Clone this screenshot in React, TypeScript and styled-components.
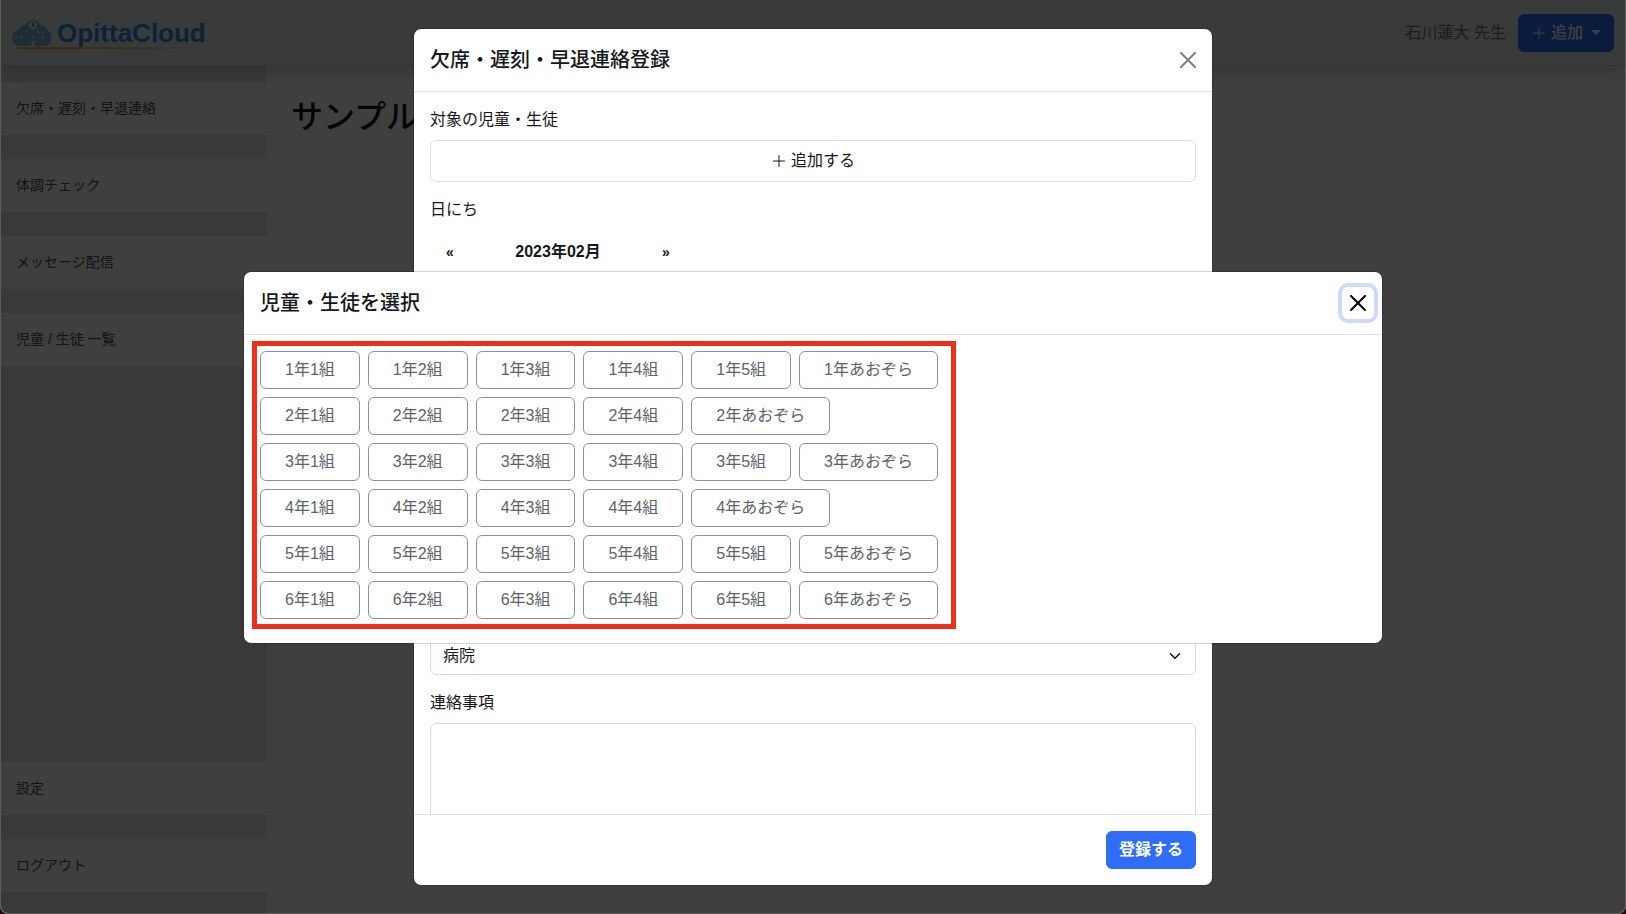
import React from "react";
import styled, { createGlobalStyle } from "styled-components";

const GlobalStyle = createGlobalStyle`
  *, *::before, *::after { box-sizing: border-box; }
  body {
    margin: 0;
    background: #2a060c;
    color: #14171a;
    font: 16px/24px "Liberation Sans", "Noto Sans CJK JP", sans-serif;
  }
  button, select, textarea { font: inherit; color: inherit; margin: 0; }
  h1, h2, p { margin: 0; }
`;

/* ---------- window and page behind the dialogs ---------- */

const Window = styled.div`
  position: relative;
  display: flex;
  flex-direction: column;
  height: 100vh;
  overflow: hidden;
  background: #fff;
  border: 1px solid #5c5c5c;
  border-top: 0;
  border-radius: 0 0 8px 8px;
`;

const Header = styled.header`
  position: relative;
  display: flex;
  align-items: center;
  justify-content: space-between;
  flex: none;
  height: 66px;
  padding: 0 11px;
  background: #e5e8eb;
  border-bottom: 1px solid #d0d3d6;
  box-shadow: 0 8px 16px rgba(0, 0, 0, 0.15);
`;

const Brand = styled.a`
  display: flex;
  align-items: center;
  gap: 5px;
  color: #2f8ddc;
  font-size: 26px;
  font-weight: 700;
  line-height: 32px;
  text-decoration: none;
  background: linear-gradient(90deg, #f5a81c, rgba(245, 168, 28, 0.6) 60%, rgba(245, 168, 28, 0)) 3px 100% / 100% 2px
    no-repeat;
`;

const Account = styled.div`
  display: flex;
  align-items: center;
  gap: 12px;
  color: #6c757d;
`;

const PrimaryButton = styled.button`
  display: inline-flex;
  align-items: center;
  gap: 4px;
  padding: 6px 12px;
  border: 1px solid #2f6df6;
  border-radius: 6px;
  background: #2f6df6;
  color: #fff;
  font-weight: ${(p: { $bold?: boolean }) => (p.$bold ? 700 : 500)};
`;

const Caret = styled.span`
  margin-left: 4px;
  border: 5px solid transparent;
  border-top-color: currentColor;
  border-bottom: 0;
`;

const Columns = styled.div`
  display: flex;
  flex: 1;
  min-height: 0;
`;

const Sidebar = styled.nav`
  display: flex;
  flex-direction: column;
  gap: 24px;
  flex: none;
  width: 266px;
  padding: 16px 0 21px;
  background: #e3e7eb;
`;

const NavGroup = styled.div`
  display: flex;
  flex-direction: column;
  gap: 24px;
  &:last-child { margin-top: auto; }
`;

const NavLink = styled.a`
  padding: 16px 15px;
  background: #fff;
  color: #495057;
  font-size: 14px;
  line-height: 21px;
  text-decoration: none;
`;

const Main = styled.main`
  flex: 1;
  padding: 32px 24px;
`;

const PageTitle = styled.h1`
  font-size: 32px;
  font-weight: 500;
  line-height: 38px;
`;

/* ---------- dialogs ---------- */

const Backdrop = styled.div`
  position: absolute;
  inset: 0;
  background: rgba(0, 0, 0, 0.5);
`;

const ModalLayer = styled.div`
  position: absolute;
  inset: 0;
  display: flex;
  align-items: center;
  justify-content: center;
  padding: 28px 28px 27px;
`;

const Dialog = styled.section<{ $width: number; $tall?: boolean }>`
  display: flex;
  flex-direction: column;
  width: 100%;
  max-width: ${(p) => p.$width}px;
  height: ${(p) => (p.$tall ? "100%" : "auto")};
  overflow: hidden;
  background: #fff;
  background-clip: padding-box;
  border: 1px solid rgba(0, 0, 0, 0.175);
  border-radius: 8px;
`;

const DialogHeader = styled.header`
  display: flex;
  align-items: center;
  justify-content: space-between;
  flex: none;
  padding: 16px;
  border-bottom: 1px solid #dee2e6;
`;

const DialogTitle = styled.h2`
  font-size: 20px;
  font-weight: 500;
  line-height: 30px;
`;

const CloseButton = styled.button<{ $focused?: boolean }>`
  display: grid;
  place-items: center;
  width: 32px;
  height: 32px;
  margin: -8px;
  padding: 0;
  border: 0;
  border-radius: 6px;
  background: none;
  color: ${(p) => (p.$focused ? "#000" : "#7f7f7f")};
  box-shadow: ${(p) => (p.$focused ? "0 0 0 4px #cbdafd" : "none")};
`;

const FormBody = styled.div`
  display: flex;
  flex-direction: column;
  flex: 1;
  gap: 16px;
  min-height: 0;
  overflow: hidden;
  padding: 16px;
`;

const Field = styled.div`
  display: flex;
  flex-direction: column;
  flex: none;
  gap: 8px;
`;

const AddRow = styled.button`
  display: flex;
  align-items: center;
  justify-content: center;
  gap: 4px;
  padding: 8px 16px;
  border: 1px solid #dfdfdf;
  border-radius: 6px;
  background: #fff;
`;

const Calendar = styled.div`
  min-height: 391px;
`;

const CalendarHead = styled.div`
  display: grid;
  grid-template-columns: 36px 180px 36px;
  align-items: center;
  height: 44px;
  padding-left: 2px;
  font-weight: 700;
  text-align: center;
`;

const MonthStep = styled.button`
  padding: 0;
  border: 0;
  background: none;
  font-size: 14px;
`;

const SelectWrap = styled.div`
  position: relative;
  display: flex;
  svg {
    position: absolute;
    right: 13px;
    top: 13px;
    pointer-events: none;
  }
`;

const Select = styled.select`
  flex: 1;
  height: 38px;
  padding: 6px 12px;
  appearance: none;
  border: 1px solid #d5d9e0;
  border-radius: 6px;
  background: #fff;
`;

const TextArea = styled.textarea`
  height: 160px;
  padding: 6px 12px;
  border: 1px solid #d5d9e0;
  border-radius: 6px;
  resize: none;
`;

const DialogFooter = styled.footer`
  display: flex;
  justify-content: flex-end;
  flex: none;
  padding: 16px;
  border-top: 1px solid #dee2e6;
`;

const PickerBody = styled.div`
  padding: 6px 8px 14px;
`;

const ClassBoard = styled.div`
  display: flex;
  flex-direction: column;
  gap: 8px;
  width: fit-content;
  padding: 5px 13px 5px 3px;
  border: 5px solid #ee2f1c;
`;

const GradeRow = styled.div`
  display: flex;
  gap: 8px;
`;

const ClassButton = styled.button`
  padding: 6px 24px;
  border: 1px solid #8d9297;
  border-radius: 6px;
  background: #fff;
  color: #5c636a;
  white-space: nowrap;
`;

/* ---------- drawings ---------- */

const CloudLogo = () => (
  <svg width="40" height="28" viewBox="0 0 40 28" aria-hidden="true">
    <path
      d="M9 27C4 27 0.5 23.5 0.5 18.500C0.500 14 3.500 10.500 7.500 10C8 7 11 5.500 14 6C15 3 18 1 21 1S27 3 28.500 6.500C31.500 5.500 34.500 7.500 35 11C38 12 39.500 15 39.500 18.500C39.500 23.500 36 27 31 27H22.500V22H19.500V27Z"
      fill="#74b6d2"
    />
    <circle cx="21" cy="6.500" r="4.200" fill="#e4e7ea" />
    <path d="M21 3.800V7H22.600" fill="none" stroke="#444" strokeWidth="1.200" />
    <g fill="#d8e6ee">
      {[[4, 18], [9, 18], [15, 13], [21, 18], [26, 13], [31, 13], [31, 18]].map(([x, y], i) => (
        <circle key={i} cx={x} cy={y} r="1.300" />
      ))}
    </g>
  </svg>
);

const PlusIcon = () => (
  <svg width="16" height="16" viewBox="0 0 16 16" fill="currentColor" aria-hidden="true">
    <path d="M8 2a.5.5 0 0 1 .5.5v5h5a.5.5 0 0 1 0 1h-5v5a.5.5 0 0 1-1 0v-5h-5a.5.5 0 0 1 0-1h5v-5A.5.5 0 0 1 8 2Z" />
  </svg>
);

const CloseIcon = () => (
  <svg width="16" height="16" viewBox="0 0 16 16" fill="currentColor" aria-hidden="true">
    <path d="M.293.293a1 1 0 0 1 1.414 0L8 6.586 14.293.293a1 1 0 1 1 1.414 1.414L9.414 8l6.293 6.293a1 1 0 0 1-1.414 1.414L8 9.414l-6.293 6.293a1 1 0 0 1-1.414-1.414L6.586 8 .293 1.707a1 1 0 0 1 0-1.414z" />
  </svg>
);

const ChevronIcon = () => (
  <svg width="16" height="12" viewBox="0 0 16 16" preserveAspectRatio="xMidYMid meet" aria-hidden="true">
    <path d="m2 5 6 6 6-6" fill="none" stroke="#14171a" strokeWidth="2" strokeLinecap="round" strokeLinejoin="round" />
  </svg>
);

/* ---------- data ---------- */

const mainLinks = ["欠席・遅刻・早退連絡", "体調チェック", "メッセージ配信", "児童 / 生徒 一覧"];
const accountLinks = ["設定", "ログアウト"];

const classCounts = [5, 4, 5, 4, 5, 5];
const grades = classCounts.map((count, i) => [
  ...Array.from({ length: count }, (_, n) => `${i + 1}年${n + 1}組`),
  `${i + 1}年あおぞら`,
]);

export default function App() {
  return (
    <Window>
      <GlobalStyle />
      <Header>
        <Brand href="#">
          <CloudLogo />
          OpittaCloud
        </Brand>
        <Account>
          <span>石川蓮大 先生</span>
          <PrimaryButton type="button">
            <PlusIcon />
            追加
            <Caret />
          </PrimaryButton>
        </Account>
      </Header>
      <Columns>
        <Sidebar>
          {[mainLinks, accountLinks].map((links) => (
            <NavGroup key={links[0]}>
              {links.map((label) => (
                <NavLink key={label} href="#">
                  {label}
                </NavLink>
              ))}
            </NavGroup>
          ))}
        </Sidebar>
        <Main>
          <PageTitle>サンプル</PageTitle>
        </Main>
      </Columns>

      <Backdrop />
      <Backdrop />

      <ModalLayer>
        <Dialog $width={800} $tall role="dialog" aria-labelledby="report-title">
          <DialogHeader>
            <DialogTitle id="report-title">欠席・遅刻・早退連絡登録</DialogTitle>
            <CloseButton type="button" aria-label="閉じる">
              <CloseIcon />
            </CloseButton>
          </DialogHeader>
          <FormBody>
            <Field>
              <span id="student-label">対象の児童・生徒</span>
              <AddRow type="button" aria-describedby="student-label">
                <PlusIcon />
                追加する
              </AddRow>
            </Field>
            <Field>
              <span>日にち</span>
              <Calendar>
                <CalendarHead>
                  <MonthStep type="button">«</MonthStep>
                  <span>2023年02月</span>
                  <MonthStep type="button">»</MonthStep>
                </CalendarHead>
              </Calendar>
            </Field>
            <SelectWrap>
              <Select aria-label="理由" defaultValue="病院">
                <option>病院</option>
              </Select>
              <ChevronIcon />
            </SelectWrap>
            <Field>
              <label htmlFor="note">連絡事項</label>
              <TextArea id="note" />
            </Field>
          </FormBody>
          <DialogFooter>
            <PrimaryButton type="button" $bold>
              登録する
            </PrimaryButton>
          </DialogFooter>
        </Dialog>
      </ModalLayer>

      <ModalLayer>
        <Dialog $width={1140} role="dialog" aria-modal="true" aria-labelledby="picker-title">
          <DialogHeader>
            <DialogTitle id="picker-title">児童・生徒を選択</DialogTitle>
            <CloseButton type="button" $focused aria-label="閉じる">
              <CloseIcon />
            </CloseButton>
          </DialogHeader>
          <PickerBody>
            <ClassBoard>
              {grades.map((classes) => (
                <GradeRow key={classes[0]}>
                  {classes.map((name) => (
                    <ClassButton key={name} type="button">
                      {name}
                    </ClassButton>
                  ))}
                </GradeRow>
              ))}
            </ClassBoard>
          </PickerBody>
        </Dialog>
      </ModalLayer>
    </Window>
  );
}
